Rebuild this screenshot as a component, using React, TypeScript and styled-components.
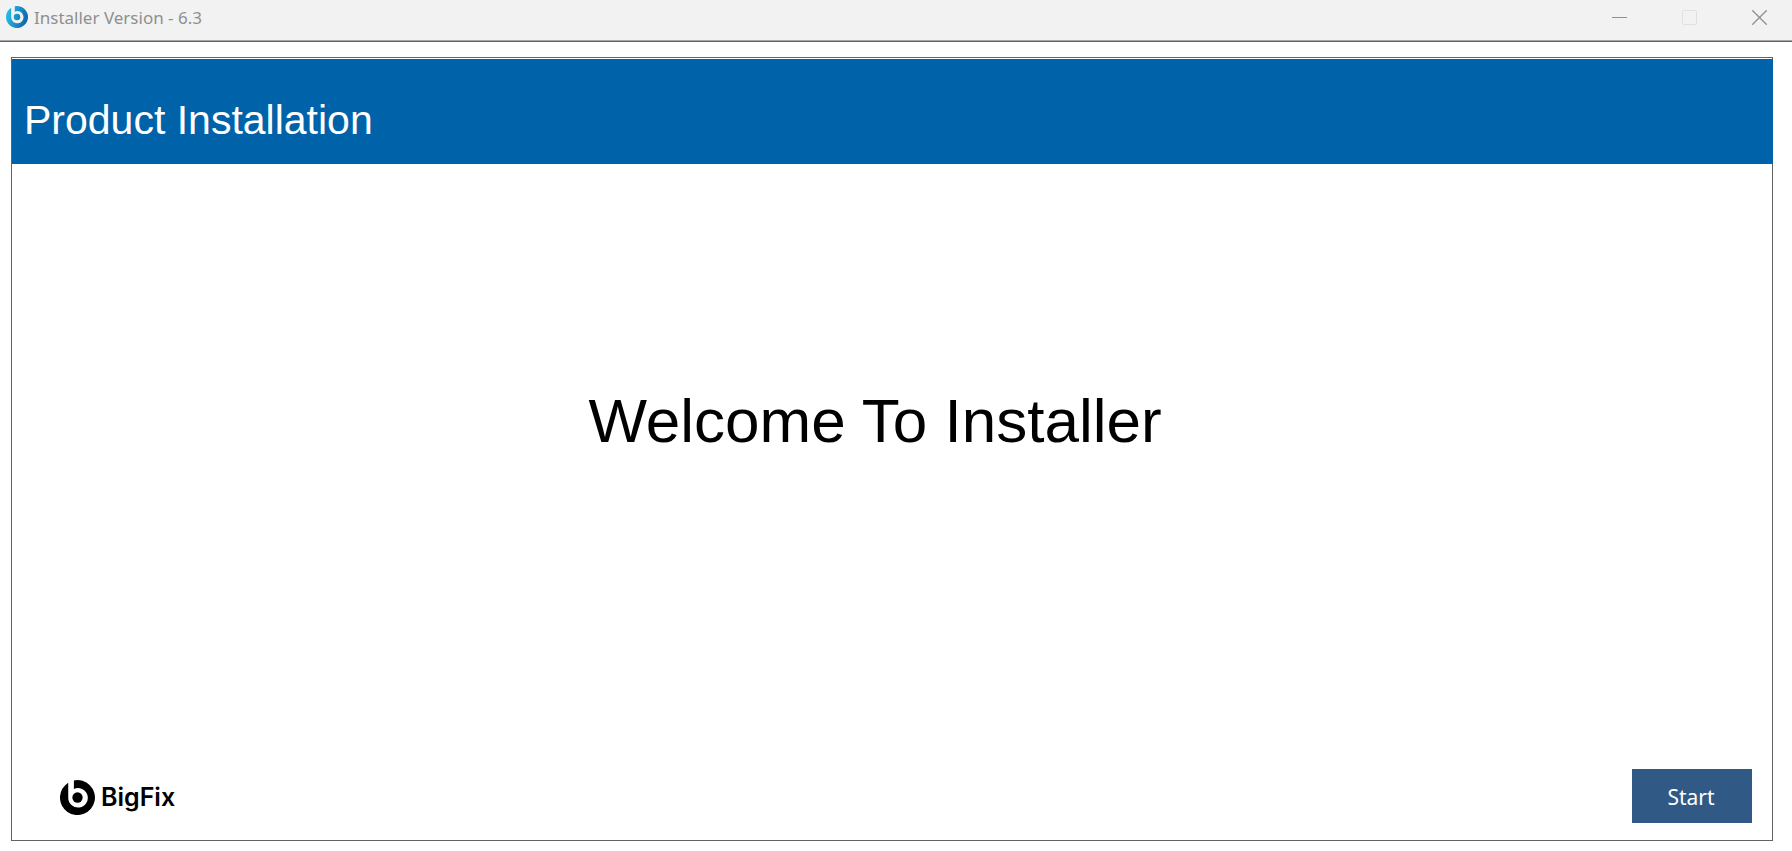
import React from "react";
import styled, { createGlobalStyle } from "styled-components";

const GlobalStyle = createGlobalStyle`
  *, *::before, *::after { box-sizing: border-box; }
  body { margin: 0; background: #ffffff; }
`;

const Window = styled.div`
  display: flex;
  flex-direction: column;
  min-height: 100vh;
  background: #ffffff;
  font-family: "Liberation Sans", Arial, sans-serif;
`;

const TitleBar = styled.header`
  display: flex;
  align-items: flex-start;
  height: 42px;
  padding-left: 6px;
  background: #f2f2f2;
  border-bottom: 1px solid #626262;
  box-shadow: inset 0 -1px 0 #a6a6a6;
  color: #8f8f8f;
`;

const AppIcon = styled.svg`
  width: 22px;
  height: 22px;
  margin-top: 6px;
`;

const Caption = styled.span`
  flex: 1;
  margin-left: 6px;
  font: 17px/36px "Noto Sans", "Segoe UI", sans-serif;
`;

const WindowButtons = styled.div`
  display: flex;
  margin-right: -2px;
`;

const WindowButton = styled.button<{ $faded?: boolean }>`
  display: flex;
  align-items: center;
  justify-content: center;
  width: 70px;
  height: 35px;
  padding: 0;
  border: 0;
  background: transparent;
  color: ${({ $faded }) => ($faded ? "#e0e0e0" : "#8f8f8f")};
`;

const Frame = styled.main`
  display: flex;
  flex: 1;
  flex-direction: column;
  margin: 15px 19px 10px 11px;
  padding-top: 1px;
  border: 1px solid #636363;
`;

const Banner = styled.div`
  margin-right: -1px;
  padding: 37px 12px 20px;
  background: #0063aa;
`;

const BannerTitle = styled.h1`
  margin: 0;
  color: #ffffff;
  font-size: 41px;
  font-weight: 400;
  line-height: 48px;
`;

const Content = styled.section`
  display: flex;
  flex: 1;
  align-items: center;
  justify-content: center;
  padding: 0 34px 92px 0;
`;

const Welcome = styled.h2`
  margin: 0;
  color: #000000;
  font-size: 62px;
  font-weight: 400;
  line-height: 72px;
`;

const Footer = styled.footer`
  display: flex;
  align-items: center;
  justify-content: space-between;
  padding: 0 20px 17px 48px;
`;

const Brand = styled.div`
  display: flex;
  align-items: center;
  gap: 6px;
  padding-top: 2px;
  color: #000000;
`;

const BrandName = styled.span`
  font: 600 25px/34px "Inter", sans-serif;
`;

const StartButton = styled.button`
  width: 120px;
  height: 54px;
  padding: 2px 2px 0 0;
  border: 0;
  background: #305a85;
  color: #ffffff;
  font: 21px/24px "Noto Sans", "Segoe UI", sans-serif;
`;

const MARK =
  "M13.5 0.4 A17 17 0 1 1 8 2.6 V17.5 A9.5 9.5 0 1 0 13.5 8.7 Z";

function Mark() {
  return (
    <>
      <path d={MARK} />
      <circle cx="17" cy="17" r="5" />
    </>
  );
}

export default function App() {
  return (
    <Window>
      <GlobalStyle />
      <TitleBar>
        <AppIcon viewBox="0 0 34 34" fill="url(#mark)" aria-hidden="true">
          <defs>
            <linearGradient id="mark" gradientUnits="userSpaceOnUse" x1="0" y1="12" x2="34" y2="22">
              <stop offset="0" stopColor="#28c0e4" />
              <stop offset="1" stopColor="#0c62ac" />
            </linearGradient>
          </defs>
          <Mark />
        </AppIcon>
        <Caption>Installer Version - 6.3</Caption>
        <WindowButtons>
          <WindowButton aria-label="Minimize">
            <svg width="15" height="15" stroke="currentColor" aria-hidden="true">
              <path d="M0 7.5H15" />
            </svg>
          </WindowButton>
          <WindowButton aria-label="Maximize" $faded disabled>
            <svg width="15" height="15" fill="none" stroke="currentColor" aria-hidden="true">
              <rect x="0.5" y="0.5" width="14" height="14" rx="1" />
            </svg>
          </WindowButton>
          <WindowButton aria-label="Close">
            <svg width="15" height="15" stroke="currentColor" strokeWidth="1.3" aria-hidden="true">
              <path d="M0.3 0.3L14.7 14.7M14.7 0.3L0.3 14.7" />
            </svg>
          </WindowButton>
        </WindowButtons>
      </TitleBar>
      <Frame>
        <Banner>
          <BannerTitle>Product Installation</BannerTitle>
        </Banner>
        <Content>
          <Welcome>Welcome To Installer</Welcome>
        </Content>
        <Footer>
          <Brand>
            <svg width="35" height="35" viewBox="0 0 34 34" aria-hidden="true">
              <Mark />
            </svg>
            <BrandName>BigFix</BrandName>
          </Brand>
          <StartButton>Start</StartButton>
        </Footer>
      </Frame>
    </Window>
  );
}
